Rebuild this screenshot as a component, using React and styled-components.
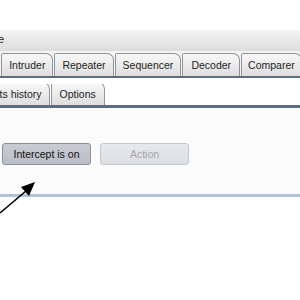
import React from 'react';
import styled, { createGlobalStyle } from 'styled-components';

const Global = createGlobalStyle`
  html, body { margin: 0; padding: 0; background: #fff; overflow: hidden; }
  body { font-family: "Liberation Sans", Arial, sans-serif; }
`;

const Page = styled.div`
  width: 300px;
  height: 300px;
  overflow: hidden;
  background: #fff;
  display: flex;
  flex-direction: column;
`;

const TopSpace = styled.div`
  height: 30px;
`;

const MenuBar = styled.div`
  height: 21px;
  background: linear-gradient(#f4f4f4, #dcdcdc);
  font-size: 11px;
  color: #222;
  display: flex;
  align-items: flex-start;
  overflow: hidden;
  white-space: nowrap;
`;

const MenuText = styled.span`
  margin-left: -2px;
  margin-top: 3px;
`;

const TabRow = styled.div`
  height: 25px;
  background: #f4f4f4;
  display: flex;
  align-items: flex-end;
  border-bottom: 2px solid #5d6d7e;
  overflow: hidden;
  white-space: nowrap;
`;

const Tab = styled.div`
  flex: none;
  height: 23px;
  box-sizing: border-box;
  padding: 0 ${p => p.$pad || 7}px;
  margin-right: 1px;
  margin-left: ${p => p.$offset || 0}px;
  border: 1px solid #8e959c;
  border-bottom: none;
  border-radius: 2px 7px 0 0;
  background: linear-gradient(#f8f8f8, #dedede);
  font-size: 10.5px;
  color: #1e1e1e;
  display: flex;
  align-items: center;
`;

const SubGap = styled.div`
  height: 6px;
  background: #fff;
`;

const SubRow = styled.div`
  height: 21px;
  display: flex;
  align-items: flex-end;
  border-bottom: 3px solid #5d6d7e;
  overflow: hidden;
  white-space: nowrap;
`;

const Content = styled.div`
  position: relative;
  height: 89px;
  background: #fbfbfb;
  border-bottom: 3px solid #b1c3d7;
  display: flex;
  align-items: flex-start;
  padding: 35px 0 0 2px;
  box-sizing: border-box;
  gap: 9px;
`;

const Button = styled.div`
  width: ${p => p.$w}px;
  height: 22px;
  box-sizing: border-box;
  border: 1px solid ${p => (p.$on ? '#8a8f98' : '#c4c8ce')};
  border-radius: 3px;
  background: ${p => (p.$on ? 'linear-gradient(#c9ccd3, #b9bdc6)' : 'linear-gradient(#e7e9ec, #dcdfe3)')};
  color: ${p => (p.$on ? '#111' : '#a4a6a9')};
  font-size: 10.5px;
  display: flex;
  align-items: center;
  justify-content: center;
`;

const Arrow = styled.svg`
  position: absolute;
  left: 0;
  top: 69px;
`;

const Rest = styled.div`
  flex: 1;
  background: #fff;
`;

export default function App() {
  return (
    <Page>
      <Global />
      <TopSpace />
      <MenuBar>
        <MenuText>e</MenuText>
      </MenuBar>
      <TabRow>
        <Tab $offset={-45}>Target</Tab>
        <Tab>Intruder</Tab>
        <Tab>Repeater</Tab>
        <Tab>Sequencer</Tab>
        <Tab $pad={8}>Decoder</Tab>
        <Tab $pad={6}>Comparer</Tab>
      </TabRow>
      <SubGap />
      <SubRow>
        <Tab $offset={-59}>WebSockets history</Tab>
        <Tab $pad={8}>Options</Tab>
      </SubRow>
      <Content>
        <Button $on $w={89}>Intercept is on</Button>
        <Button $w={89}>Action</Button>
        <Arrow width="40" height="40" viewBox="0 0 40 40">
          <line x1="0" y1="36" x2="26" y2="14" stroke="#000" strokeWidth="1.6" />
          <polygon points="35,5 21,10 29,19" fill="#000" />
        </Arrow>
      </Content>
      <Rest />
    </Page>
  );
}
